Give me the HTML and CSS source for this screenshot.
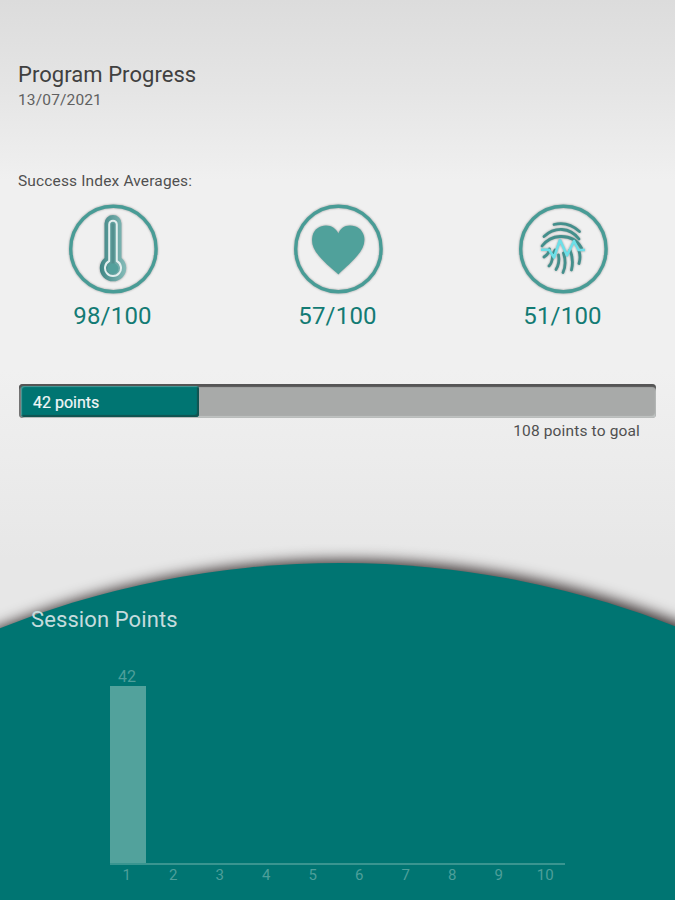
FILE: index.html
```html
<!DOCTYPE html>
<html lang="en">
<head>
  <meta charset="UTF-8" />
  <meta name="viewport" content="width=device-width, initial-scale=1.0" />
  <title>Program Progress</title>
  <link rel="stylesheet" href="styles.css">
</head>
<body>
  <main class="page">
    <header>
      <h1>Program Progress</h1>
      <p class="date">13/07/2021</p>
    </header>

    <section class="averages">
      <h2>Success Index Averages:</h2>
      <div class="scores">
        <div class="score">
          <svg class="icon" viewBox="0 0 92 92">
            <defs>
              <linearGradient id="mercury" x1="0" x2="1">
                <stop offset="0" stop-color="#3f8584" />
                <stop offset="1" stop-color="#86bcb9" />
              </linearGradient>
            </defs>
            <circle class="ring" cx="46.4" cy="46" r="42.700" />
            <path fill="url(#mercury)" d="M37.5 20.500a8.500 8.500 0 0 1 17 0V55a13.200 13.200 0 1 1-17 0z" />
            <path class="tube" d="M42.200 21.500a3.800 3.800 0 0 1 7.600 0V58a8 8 0 1 1-7.600 0z" />
            <path class="stem" d="M46 20.500V62" />
            <circle fill="#53a09c" cx="46" cy="65.500" r="5.300" />
          </svg>
          <p>98/100</p>
        </div>
        <div class="score">
          <svg class="icon" viewBox="0 0 92 92">
            <circle class="ring" cx="46.4" cy="46" r="42.700" />
            <path class="heart" d="M46.500 71.500C42 67 34 61.500 27 53C21 46 19 40 20.500 33C22 26 28 22.500 34 22.500C40 22.500 44 26 46.500 30.500C48 26 52 22.500 58 22.500C65 22.500 70 26 72 33C73.500 40 71 46 65 53C58 61.500 50 67 46.500 71.500z" />
          </svg>
          <p>57/100</p>
        </div>
        <div class="score">
          <svg class="icon" viewBox="0 0 92 92">
            <circle class="ring" cx="46.4" cy="46" r="42.700" />
            <g class="ridges">
              <path d="M37 21.500Q51 18 62.500 28.500" />
              <path d="M27 33.500Q35 26 45 26.500Q55 27 62 36" />
              <path d="M25 43Q32 34 43 33.500Q58 33 64.500 45" />
              <path d="M27 54Q32 51 32.500 46" />
              <path d="M32 63Q35 60 35.500 54Q36 50 38 47" />
              <path d="M39 66.500Q43 60 41.500 52" />
              <path d="M46 69.500Q50 61 46.500 50" />
              <path d="M54.500 67Q57 57 53 47" />
              <path d="M62 60.500Q64 54 62 48" />
            </g>
            <path class="pulse" d="M24 46.700H32L37 54.500L43 37L50 52.500L57 38L61.500 47H68" />
          </svg>
          <p>51/100</p>
        </div>
      </div>
    </section>

    <section class="goal">
      <div class="track">
        <div class="fill" style="width: 28%">42 points</div>
      </div>
      <p class="remaining">108 points to goal</p>
    </section>

    <section class="session">
      <h2>Session Points</h2>
      <div class="chart">
        <div class="bars">
          <div class="bar"><span>42</span><i style="height: 177px"></i></div>
        </div>
        <div class="labels">
          <span>1</span>
          <span>2</span>
          <span>3</span>
          <span>4</span>
          <span>5</span>
          <span>6</span>
          <span>7</span>
          <span>8</span>
          <span>9</span>
          <span>10</span>
        </div>
      </div>
    </section>
  </main>
</body>
</html>
```
FILE: styles.css
```css
* {
  margin: 0;
  padding: 0;
  box-sizing: border-box;
}

body {
  font-family: Roboto, "Liberation Sans", sans-serif;
  color: #505050;
}

h1,
h2 {
  font-weight: 400;
}

.page {
  display: flex;
  flex-direction: column;
  width: 675px;
  height: 900px;
  overflow: hidden;
  background: linear-gradient(#dcdcdc 0, #e5e5e5 90px, #f0f0f0 180px, #f0f0f0 370px, #e7e7e7 560px);
}

header {
  height: 170px;
  padding: 62px 18px 0;
}

h1 {
  font-size: 22px;
  line-height: 25px;
  letter-spacing: 0.05px;
  color: #404040;
}

.date {
  font-size: 15.5px;
  line-height: 26px;
  letter-spacing: 0.15px;
  color: #606060;
}

.averages {
  height: 214px;
}

.averages h2 {
  padding-left: 18px;
  font-size: 15.5px;
  line-height: 22px;
  letter-spacing: 0.15px;
}

.scores {
  display: grid;
  grid-template-columns: repeat(3, 1fr);
  padding-top: 11px;
}

.score {
  display: flex;
  flex-direction: column;
  align-items: center;
  font-size: 24px;
  line-height: 28px;
  letter-spacing: 0.2px;
  color: #137b74;
}

.score p {
  margin-top: 7px;
}

.icon {
  width: 92px;
  height: 92px;
  filter: drop-shadow(0.5px 0.5px 1px rgba(0, 0, 0, 0.35));
}

.ring {
  fill: none;
  stroke: #489c96;
  stroke-width: 3.4;
}

.tube {
  fill: none;
  stroke: #e3eeee;
  stroke-width: 2;
}

.stem {
  stroke: #53908f;
  stroke-width: 3;
}

.heart {
  fill: #50a19b;
}

.ridges {
  fill: none;
  stroke: #438f8c;
  stroke-width: 2.8;
  stroke-linecap: round;
}

.pulse {
  fill: none;
  stroke: #6ddfe8;
  stroke-width: 2.6;
  stroke-linejoin: round;
}

.goal {
  height: 156px;
  padding: 0 19px;
}

.track {
  height: 34px;
  padding: 2px 0 1px 2px;
  border-radius: 4px;
  background: #a8aaa9;
  box-shadow: inset 0 3px 1px #555, inset 2px 0 1px #777, inset -1px -2px 1px #c0c4c3;
}

.fill {
  height: 31px;
  padding-left: 12px;
  border-radius: 3px;
  background: #007572;
  box-shadow: inset 1px 1px 1px #4b9b98, inset -2px -2px 1px #115350;
  font-size: 16px;
  line-height: 33px;
  color: #f2f7f7;
  -webkit-text-stroke: 0.2px #f2f7f7;
}

.remaining {
  padding-right: 16px;
  font-size: 15.5px;
  line-height: 26px;
  letter-spacing: 0.15px;
  text-align: right;
}

.session {
  position: relative;
  z-index: 0;
  flex: 1;
  overflow: hidden;
  padding-top: 66px;
}

/* rounded top of the panel */
.session::before {
  content: "";
  position: absolute;
  z-index: -1;
  top: 23px;
  left: -580px;
  width: 1840px;
  height: 1840px;
  border-radius: 50%;
  background: #007572;
  box-shadow: 5px -1px 14px 2px #3c3434;
}

.session h2 {
  padding-left: 31px;
  font-size: 22px;
  line-height: 28px;
  letter-spacing: 0.1px;
  color: #c5dcdd;
}

.chart {
  margin: 34px 110px 0;
  font-size: 15px;
  color: #4d9f9a;
}

.bars {
  display: flex;
  align-items: flex-end;
  gap: 10.5px;
  height: 197px;
  border-bottom: 2px solid #399590;
}

.bar {
  display: flex;
  flex-direction: column;
  width: 36px;
  text-align: center;
}

.bar span {
  padding-right: 2px;
  font-size: 16px;
  line-height: 18px;
}

.bar i {
  background: #52a29c;
}

.labels {
  display: grid;
  grid-template-columns: repeat(10, 46.5px);
  margin-left: -6.5px;
  line-height: 20px;
  text-align: center;
}
```
